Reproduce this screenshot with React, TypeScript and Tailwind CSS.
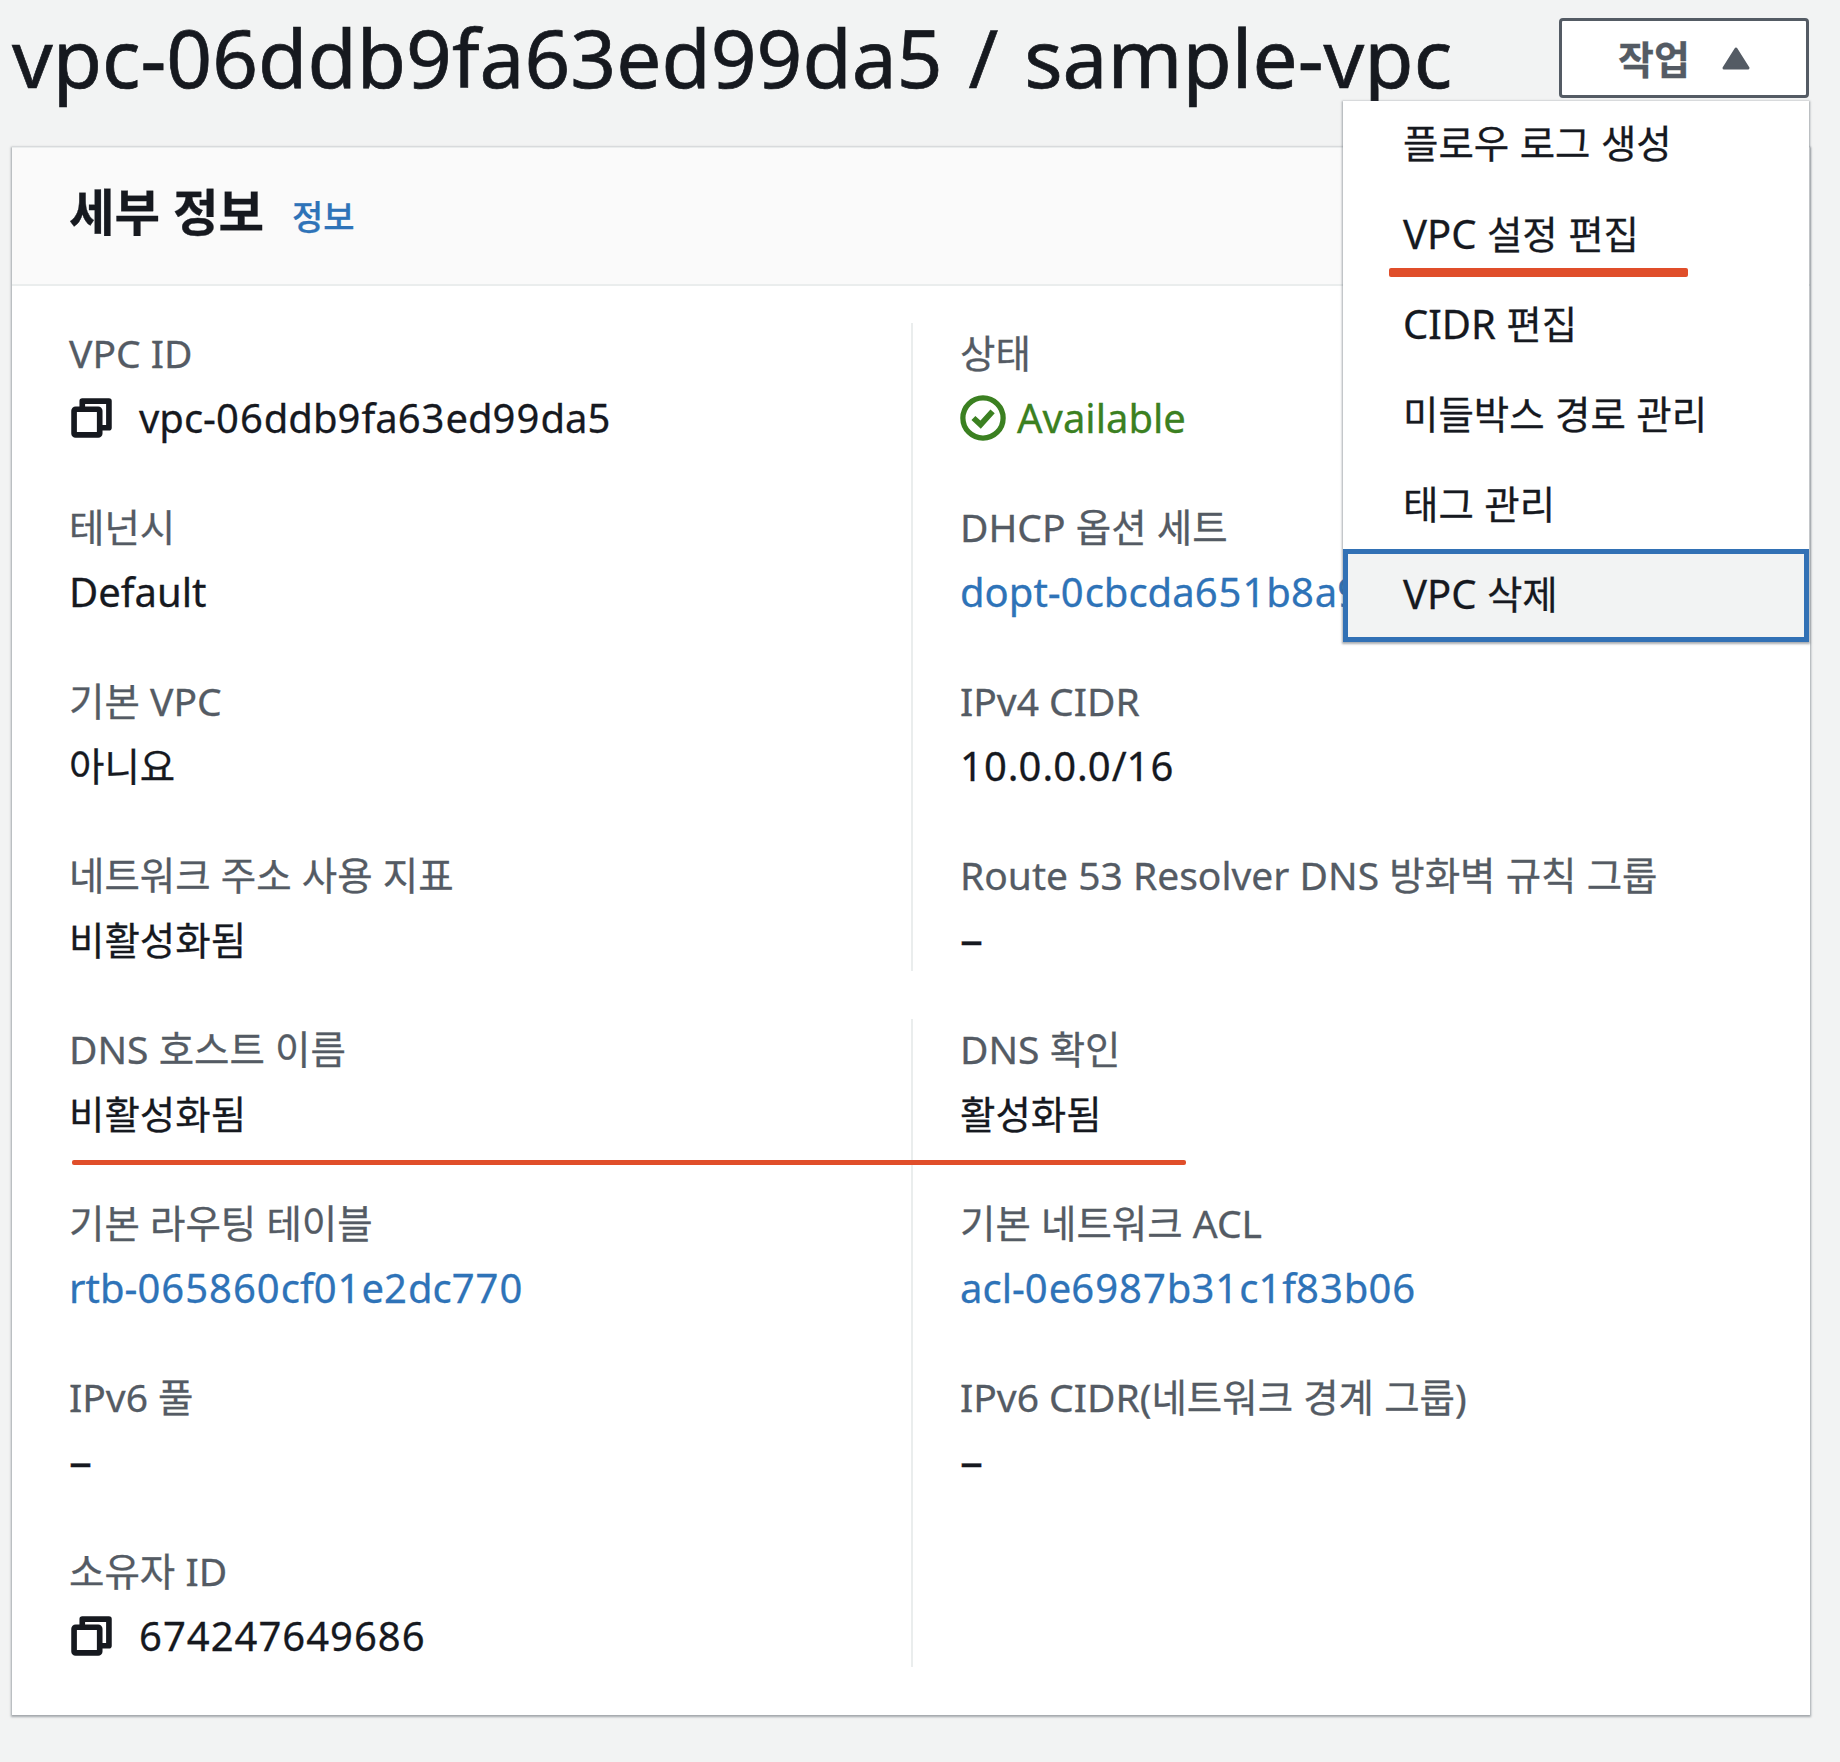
const groups = [
  [
    {
      left: { label: "VPC ID", value: "vpc-06ddb9fa63ed99da5", copy: true },
      right: { label: "상태", value: "Available", status: true },
    },
    {
      left: { label: "테넌시", value: "Default" },
      right: { label: "DHCP 옵션 세트", value: "dopt-0cbcda651b8a9", link: true },
    },
    {
      left: { label: "기본 VPC", value: "아니요" },
      right: { label: "IPv4 CIDR", value: "10.0.0.0/16" },
    },
    {
      left: { label: "네트워크 주소 사용 지표", value: "비활성화됨" },
      right: { label: "Route 53 Resolver DNS 방화벽 규칙 그룹", value: "–" },
    },
  ],
  [
    {
      left: { label: "DNS 호스트 이름", value: "비활성화됨" },
      right: { label: "DNS 확인", value: "활성화됨" },
    },
    {
      left: { label: "기본 라우팅 테이블", value: "rtb-065860cf01e2dc770", link: true },
      right: { label: "기본 네트워크 ACL", value: "acl-0e6987b31c1f83b06", link: true },
    },
    {
      left: { label: "IPv6 풀", value: "–" },
      right: { label: "IPv6 CIDR(네트워크 경계 그룹)", value: "–" },
    },
    {
      left: { label: "소유자 ID", value: "674247649686", copy: true },
      right: null,
    },
  ],
];

const menuItems = ["플로우 로그 생성", "VPC 설정 편집", "CIDR 편집", "미들박스 경로 관리", "태그 관리"];

type FieldData = {
  label: string;
  value: string;
  copy?: boolean;
  status?: boolean;
  link?: boolean;
};

// hangul runs slightly smaller than the latin text around them
function Mixed({ text }: { text: string }) {
  return (
    <>
      {text.split(/([가-힣]+)/).map((part, i) =>
        /[가-힣]/.test(part) ? (
          <span key={i} className="text-[38.5px]">
            {part}
          </span>
        ) : (
          part
        )
      )}
    </>
  );
}

// values: digits run a little wider
function Value({ text }: { text: string }) {
  if (text === "–") return <span className="mb-[5px] block text-[46px]">–</span>;
  return (
    <>
      {text.split(/([0-9]+)/).map((part, i) =>
        /[0-9]/.test(part) ? (
          <span key={i} className="tracking-[1px]">
            {part}
          </span>
        ) : (
          <Mixed key={i} text={part} />
        )
      )}
    </>
  );
}

function CopyIcon() {
  return (
    <svg viewBox="0 0 40 40" className="h-[41px] w-[41px] shrink-0" fill="none" stroke="#16191f" strokeWidth="5.5" strokeLinejoin="round">
      <rect x="3" y="12" width="25" height="25" rx="1.5" />
      <path d="M11 11V4h26v26h-8" />
    </svg>
  );
}

function StatusIcon() {
  return (
    <svg viewBox="0 0 48 48" className="h-[46px] w-[46px] shrink-0" fill="none" stroke="#3b8021">
      <circle cx="24" cy="24" r="21" strokeWidth="5.5" />
      <path d="M14 24l7.5 7L34 17" strokeWidth="6" />
    </svg>
  );
}

function Field({ field }: { field: FieldData }) {
  return (
    <div>
      <div className="flex h-[63px] items-center pb-[4px] text-[39px] whitespace-pre text-[#545b64]">
        <span>
          <Mixed text={field.label} />
        </span>
      </div>
      <div className="flex h-[63px] items-center whitespace-nowrap">
        {field.copy && (
          <span className="mr-[27px] ml-[2px] flex">
            <CopyIcon />
          </span>
        )}
        {field.status && (
          <span className="mr-[11px] flex">
            <StatusIcon />
          </span>
        )}
        <span className={field.status ? "text-[#3b8021]" : field.link ? "text-[#2e73b8]" : "text-[#16191f]"}>
          <Value text={field.value} />
        </span>
      </div>
    </div>
  );
}

export default function App() {
  return (
    <div className="relative h-[1762px] w-[1840px] overflow-hidden bg-[#f2f3f3] font-['Noto_Sans','Noto_Sans_CJK_KR',sans-serif] text-[40px] leading-none text-[#16191f] [-webkit-text-stroke:0.3px]">
      <div className="flex h-[147px] items-start justify-between pr-[31px] pl-[12px]">
        <h1 className="mt-[12px] text-[80.2px] leading-[90px] font-normal whitespace-nowrap [-webkit-text-stroke:0.7px] [word-spacing:5px]">vpc-06ddb9fa63ed99da5 / sample-vpc</h1>
        <button className="mt-[18px] flex h-[80px] w-[250px] items-center justify-center gap-[32px] rounded-[4px] border-[3px] border-[#545b64] bg-white text-[39px] font-bold text-[#545b64]">
          작업
          <svg viewBox="0 0 28 23" className="h-[23px] w-[28px]" fill="#545b64" stroke="#545b64" strokeWidth="3" strokeLinejoin="round">
            <path d="M14 2L26 21H2z" />
          </svg>
        </button>
      </div>

      <div className="mr-[30px] ml-[12px] border-t border-[#eaeded] bg-white shadow-[0_1px_2px_1px_rgba(84,91,100,0.5)]">
        <div className="flex h-[138px] items-center gap-[28px] border-b-2 border-[#eaeded] bg-[#fafafa] pl-[57px]">
          <h2 className="mb-[6px] text-[49.5px] font-bold">세부 정보</h2>
          <a className="mt-[2px] text-[34px] font-medium text-[#2e73b8]">정보</a>
        </div>
        <div className="flex flex-col gap-[48px] pt-[37px] pb-[48px] pl-[57px]">
          {groups.map((rows, i) => (
            <div key={i} className="grid grid-cols-[842px_1fr]">
              <div className="flex flex-col gap-[48px]">
                {rows.map((row) => (
                  <Field key={row.left.label} field={row.left} />
                ))}
              </div>
              <div className="flex flex-col gap-[48px] border-l-2 border-[#eaeded] pl-[47px]">
                {rows.map((row) => (row.right ? <Field key={row.right.label} field={row.right} /> : null))}
              </div>
            </div>
          ))}
        </div>
      </div>

      {/* dropdown */}
      <div className="absolute top-[101px] left-[1343px] w-[466px] bg-white shadow-[0_1px_2px_1px_rgba(84,91,100,0.5)]">
        {menuItems.map((item, i) => (
          <div key={item} className={`flex items-center pl-[60px] ${i === 0 ? "h-[88px] pb-[4px]" : "h-[90px]"}`}>
            <span>
              <Mixed text={item} />
            </span>
          </div>
        ))}
        <div className="flex h-[93px] items-center border-[5px] border-[#3271b5] bg-[#f2f3f3] pb-[4px] pl-[55px]">
          <span>
            <Mixed text="VPC 삭제" />
          </span>
        </div>
      </div>

      {/* red annotations */}
      <div className="absolute top-[268px] left-[1389px] h-[9px] w-[299px] rounded-[2px] bg-[#e04e2a]" />
      <div className="absolute top-[1160px] left-[72px] h-[5px] w-[1114px] rounded-[2px] bg-[#e04e2a]" />
    </div>
  );
}
